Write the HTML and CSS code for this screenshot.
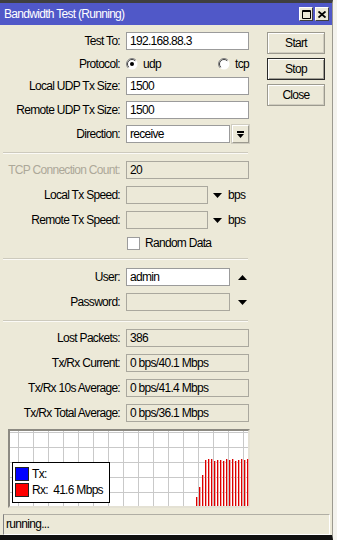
FILE: index.html
```html
<!DOCTYPE html>
<html lang="en">
<head>
    <meta charset="UTF-8">
    <meta name="viewport" content="width=device-width, initial-scale=1.0">
    <title>Bandwidth Test</title>
    <link rel="stylesheet" href="styles.css">
</head>
<body>
<div class="screen">
    <div class="window">
        <div class="titlebar">
            <span class="title">Bandwidth Test (Running)</span>
            <div class="title-buttons">
                <span class="tbtn">
                    <svg width="9" height="9" viewBox="0 0 9 9"><path d="M0.5 0.5h8v8h-8z" fill="none" stroke="#000"/><path d="M0 1.5h9" stroke="#000"/></svg>
                </span>
                <span class="tbtn">
                    <svg width="8" height="7" viewBox="0 0 8 7"><path d="M0.5 0.5l7 6M7.5 0.5l-7 6" stroke="#000" stroke-width="1.8"/></svg>
                </span>
            </div>
        </div>

        <div class="content">
            <div class="form">
                <div class="section tight">
                    <div class="row">
                        <span class="lbl">Test To:</span>
                        <span class="input">192.168.88.3</span>
                    </div>
                    <div class="row row-radio">
                        <span class="lbl">Protocol:</span>
                        <div class="radios">
                            <span class="radio-opt">
                                <svg class="radio" width="12" height="12" viewBox="0 0 12 12"><circle cx="6" cy="6" r="5.5" fill="#fff"/><path d="M2.1 9.9A5.5 5.5 0 0 1 9.9 2.1" fill="none" stroke="#808080"/><path d="M2.8 9.2A4.5 4.5 0 0 1 9.2 2.8" fill="none" stroke="#404040"/><circle cx="6" cy="6" r="2" fill="#000"/></svg>
                                udp
                            </span>
                            <span class="radio-opt">
                                <svg class="radio" width="12" height="12" viewBox="0 0 12 12"><circle cx="6" cy="6" r="5.5" fill="#fff"/><path d="M2.1 9.9A5.5 5.5 0 0 1 9.9 2.1" fill="none" stroke="#808080"/><path d="M2.8 9.2A4.5 4.5 0 0 1 9.2 2.8" fill="none" stroke="#404040"/></svg>
                                tcp
                            </span>
                        </div>
                    </div>
                    <div class="row">
                        <span class="lbl">Local UDP Tx Size:</span>
                        <span class="input">1500</span>
                    </div>
                    <div class="row">
                        <span class="lbl">Remote UDP Tx Size:</span>
                        <span class="input">1500</span>
                    </div>
                    <div class="row">
                        <span class="lbl">Direction:</span>
                        <div class="combo">
                            <span class="input short">receive</span>
                            <span class="drop-btn">
                                <svg width="7" height="7" viewBox="0 0 7 7"><rect width="7" height="2"/><polygon points="0,3 7,3 3.5,7"/></svg>
                            </span>
                        </div>
                    </div>
                </div>

                <div class="sep sep-a"></div>

                <div class="section">
                    <div class="row">
                        <span class="lbl disabled">TCP Connection Count:</span>
                        <span class="input ro">20</span>
                    </div>
                    <div class="row">
                        <span class="lbl">Local Tx Speed:</span>
                        <div class="combo">
                            <span class="input ro speed"></span>
                            <svg class="arrow" width="9" height="5" viewBox="0 0 9 5"><polygon points="0,0 9,0 4.5,5"/></svg>
                            <span class="unit">bps</span>
                        </div>
                    </div>
                    <div class="row">
                        <span class="lbl">Remote Tx Speed:</span>
                        <div class="combo">
                            <span class="input ro speed"></span>
                            <svg class="arrow" width="9" height="5" viewBox="0 0 9 5"><polygon points="0,0 9,0 4.5,5"/></svg>
                            <span class="unit">bps</span>
                        </div>
                    </div>
                    <div class="row row-check">
                        <span></span>
                        <span class="check-opt"><span class="checkbox"></span>Random Data</span>
                    </div>
                </div>

                <div class="sep sep-b"></div>

                <div class="section">
                    <div class="row">
                        <span class="lbl">User:</span>
                        <div class="combo">
                            <span class="input short">admin</span>
                            <svg class="arrow wide-gap" width="9" height="5" viewBox="0 0 9 5"><polygon points="0,5 9,5 4.5,0"/></svg>
                        </div>
                    </div>
                    <div class="row">
                        <span class="lbl">Password:</span>
                        <div class="combo">
                            <span class="input ro short"></span>
                            <svg class="arrow wide-gap" width="9" height="5" viewBox="0 0 9 5"><polygon points="0,0 9,0 4.5,5"/></svg>
                        </div>
                    </div>
                </div>

                <div class="sep sep-c"></div>

                <div class="section">
                    <div class="row">
                        <span class="lbl">Lost Packets:</span>
                        <span class="input ro">386</span>
                    </div>
                    <div class="row">
                        <span class="lbl">Tx/Rx Current:</span>
                        <span class="input ro">0 bps/40.1 Mbps</span>
                    </div>
                    <div class="row">
                        <span class="lbl">Tx/Rx 10s Average:</span>
                        <span class="input ro">0 bps/41.4 Mbps</span>
                    </div>
                    <div class="row">
                        <span class="lbl">Tx/Rx Total Average:</span>
                        <span class="input ro">0 bps/36.1 Mbps</span>
                    </div>
                </div>

                <div class="chart">
                    <div class="bars">
                        <span class="bar" style="height:9px"></span>
                        <span class="bar" style="height:19px"></span>
                        <span class="bar" style="height:31px"></span>
                        <span class="bar" style="height:46px"></span>
                        <span class="bar" style="height:47px"></span>
                        <span class="bar" style="height:47px"></span>
                        <span class="bar" style="height:45px"></span>
                        <span class="bar" style="height:46px"></span>
                        <span class="bar" style="height:46px"></span>
                        <span class="bar" style="height:45px"></span>
                        <span class="bar" style="height:47px"></span>
                        <span class="bar" style="height:46px"></span>
                        <span class="bar" style="height:47px"></span>
                        <span class="bar" style="height:45px"></span>
                        <span class="bar" style="height:46px"></span>
                        <span class="bar" style="height:47px"></span>
                        <span class="bar" style="height:46px"></span>
                        <span class="bar" style="height:47px"></span>
                    </div>
                    <div class="legend">
                        <div class="legend-item"><span class="swatch tx"></span>Tx:</div>
                        <div class="legend-item"><span class="swatch rx"></span>Rx:  41.6 Mbps</div>
                    </div>
                </div>
            </div>

            <div class="actions">
                <button class="btn">Start</button>
                <button class="btn default">Stop</button>
                <button class="btn">Close</button>
            </div>
        </div>

        <div class="statusbar">
            <div class="status-field">running...</div>
        </div>
    </div>
</div>
</body>
</html>
```

FILE: styles.css
```css
/* General */
* {
    box-sizing: border-box;
}

body {
    margin: 0;
    background-color: #f4f3ee;
    font-family: "Liberation Sans", Arial, sans-serif;
    font-size: 12px;
    letter-spacing: -0.7px;
    color: #000;
}

.screen {
    width: 337px;
    height: 540px;
}

.window {
    width: 333px;
    height: 540px;
    display: flex;
    flex-direction: column;
    background-color: #ece9d8;
    border-top: 3px solid #3f3f3f;
    border-bottom: 5px solid #111;
    border-right: 1px solid #9c9a90;
}

/* Title bar */
.titlebar {
    height: 22px;
    display: flex;
    align-items: center;
    padding: 0 3px 0 4px;
    background-color: #5058c8;
    color: #fff;
}

.title {
    flex: 1;
}

.title-buttons {
    display: flex;
    gap: 2px;
}

.tbtn {
    width: 14px;
    height: 14px;
    display: flex;
    align-items: center;
    justify-content: center;
    background-color: #ece9d8;
    border: 1px solid;
    border-color: #fff #404040 #404040 #fff;
}

/* Main area */
.content {
    display: flex;
    padding: 7px 0 0 8px;
}

.form {
    width: 242px;
    display: flex;
    flex-direction: column;
    gap: 7px;
}

.section {
    display: flex;
    flex-direction: column;
    gap: 7px;
}

.section.tight {
    gap: 6px;
}

.row {
    display: grid;
    grid-template-columns: 112px 123px;
    column-gap: 6px;
    align-items: center;
    height: 18px;
}

.row-radio {
    height: 15px;
}

.row-check {
    height: 14px;
}

.lbl {
    text-align: right;
    white-space: nowrap;
}

.lbl.disabled {
    color: #aca899;
}

.input {
    display: block;
    height: 18px;
    line-height: 16px;
    padding-left: 3px;
    border: 1px solid #9b9b9b;
    background-color: #fff;
    white-space: nowrap;
    overflow: hidden;
}

.input.ro {
    background-color: #ece9d8;
    border-color: #aaa89e;
}

.input.short {
    width: 104px;
}

.input.speed {
    width: 82px;
}

.combo {
    display: flex;
    align-items: center;
}

.drop-btn {
    width: 17px;
    height: 18px;
    margin-left: 2px;
    display: flex;
    align-items: center;
    justify-content: center;
    border: 1px solid;
    border-color: #fff #9c9a8f #9c9a8f #fff;
    box-shadow: 0 0 0 1px #cfccbf;
}

.arrow {
    margin-left: 5px;
}

.arrow.wide-gap {
    margin-left: 8px;
}

.unit {
    margin-left: 6px;
}

/* Radio and checkbox */
.radios {
    display: flex;
    justify-content: space-between;
}

.radio-opt {
    display: flex;
    align-items: center;
    gap: 5px;
}

.check-opt {
    display: flex;
    align-items: center;
    gap: 5px;
    padding-left: 1px;
}

.checkbox {
    width: 13px;
    height: 13px;
    background-color: #fff;
    border: 1px solid #9c9c9c;
}

/* Separators */
.sep {
    height: 2px;
    margin-left: -5px;
    margin-right: 2px;
    border-top: 1px solid #cdcabd;
    border-bottom: 1px solid #fbfaf6;
}

.sep-a {
    margin-top: 2px;
}

.sep-b {
    margin-top: 1px;
    margin-bottom: 1px;
}

.sep-c {
    margin-top: 2px;
}

/* Graph */
.chart {
    position: relative;
    height: 79px;
    display: flex;
    justify-content: flex-end;
    align-items: flex-end;
    border: 2px solid;
    border-color: #8c8a82 #e4e1d4 #e4e1d4 #8c8a82;
    background-color: #fff;
    background-image: linear-gradient(to right, #c9c9c9 1px, transparent 1px),
                      linear-gradient(to bottom, #c9c9c9 1px, transparent 1px);
    background-size: 15px 15px;
    background-position: 8px 1px;
}

.bars {
    display: flex;
    align-items: flex-end;
    gap: 2px;
}

.bar {
    width: 1px;
    background-color: #dd0000;
    box-shadow: 1px 0 0 #f2a8a8;
}

.legend {
    position: absolute;
    left: 2px;
    bottom: 3px;
    width: 98px;
    height: 41px;
    padding: 4px 0 0 2px;
    background-color: #fff;
    border: 1px solid #000;
    display: flex;
    flex-direction: column;
    gap: 2px;
}

.legend-item {
    display: flex;
    align-items: center;
    gap: 3px;
    white-space: pre;
}

.swatch {
    flex-shrink: 0;
    width: 14px;
    height: 14px;
    border: 1px solid #222;
}

.swatch.tx {
    background-color: #0000ff;
}

.swatch.rx {
    background-color: #ff0000;
}

/* Buttons */
.actions {
    width: 58px;
    margin-left: 17px;
    display: flex;
    flex-direction: column;
    gap: 4px;
}

.btn {
    height: 22px;
    padding: 0;
    font-family: inherit;
    font-size: 12px;
    letter-spacing: -0.7px;
    color: #000;
    background-color: #ece9d8;
    border: 1px solid #9c9a8f;
    box-shadow: inset 1px 1px #fff, inset -1px -1px #d0cdc0;
}

.btn.default {
    border-color: #2a2a2a;
    box-shadow: inset 1px 1px #fff, inset -1px -1px #a09e94;
}

/* Status bar */
.statusbar {
    margin: auto 2px 0 3px;
    height: 21px;
}

.status-field {
    height: 21px;
    line-height: 19px;
    padding-left: 2px;
    border: 1px solid;
    border-color: #b0aea4 #fff #fff #808080;
}
```
